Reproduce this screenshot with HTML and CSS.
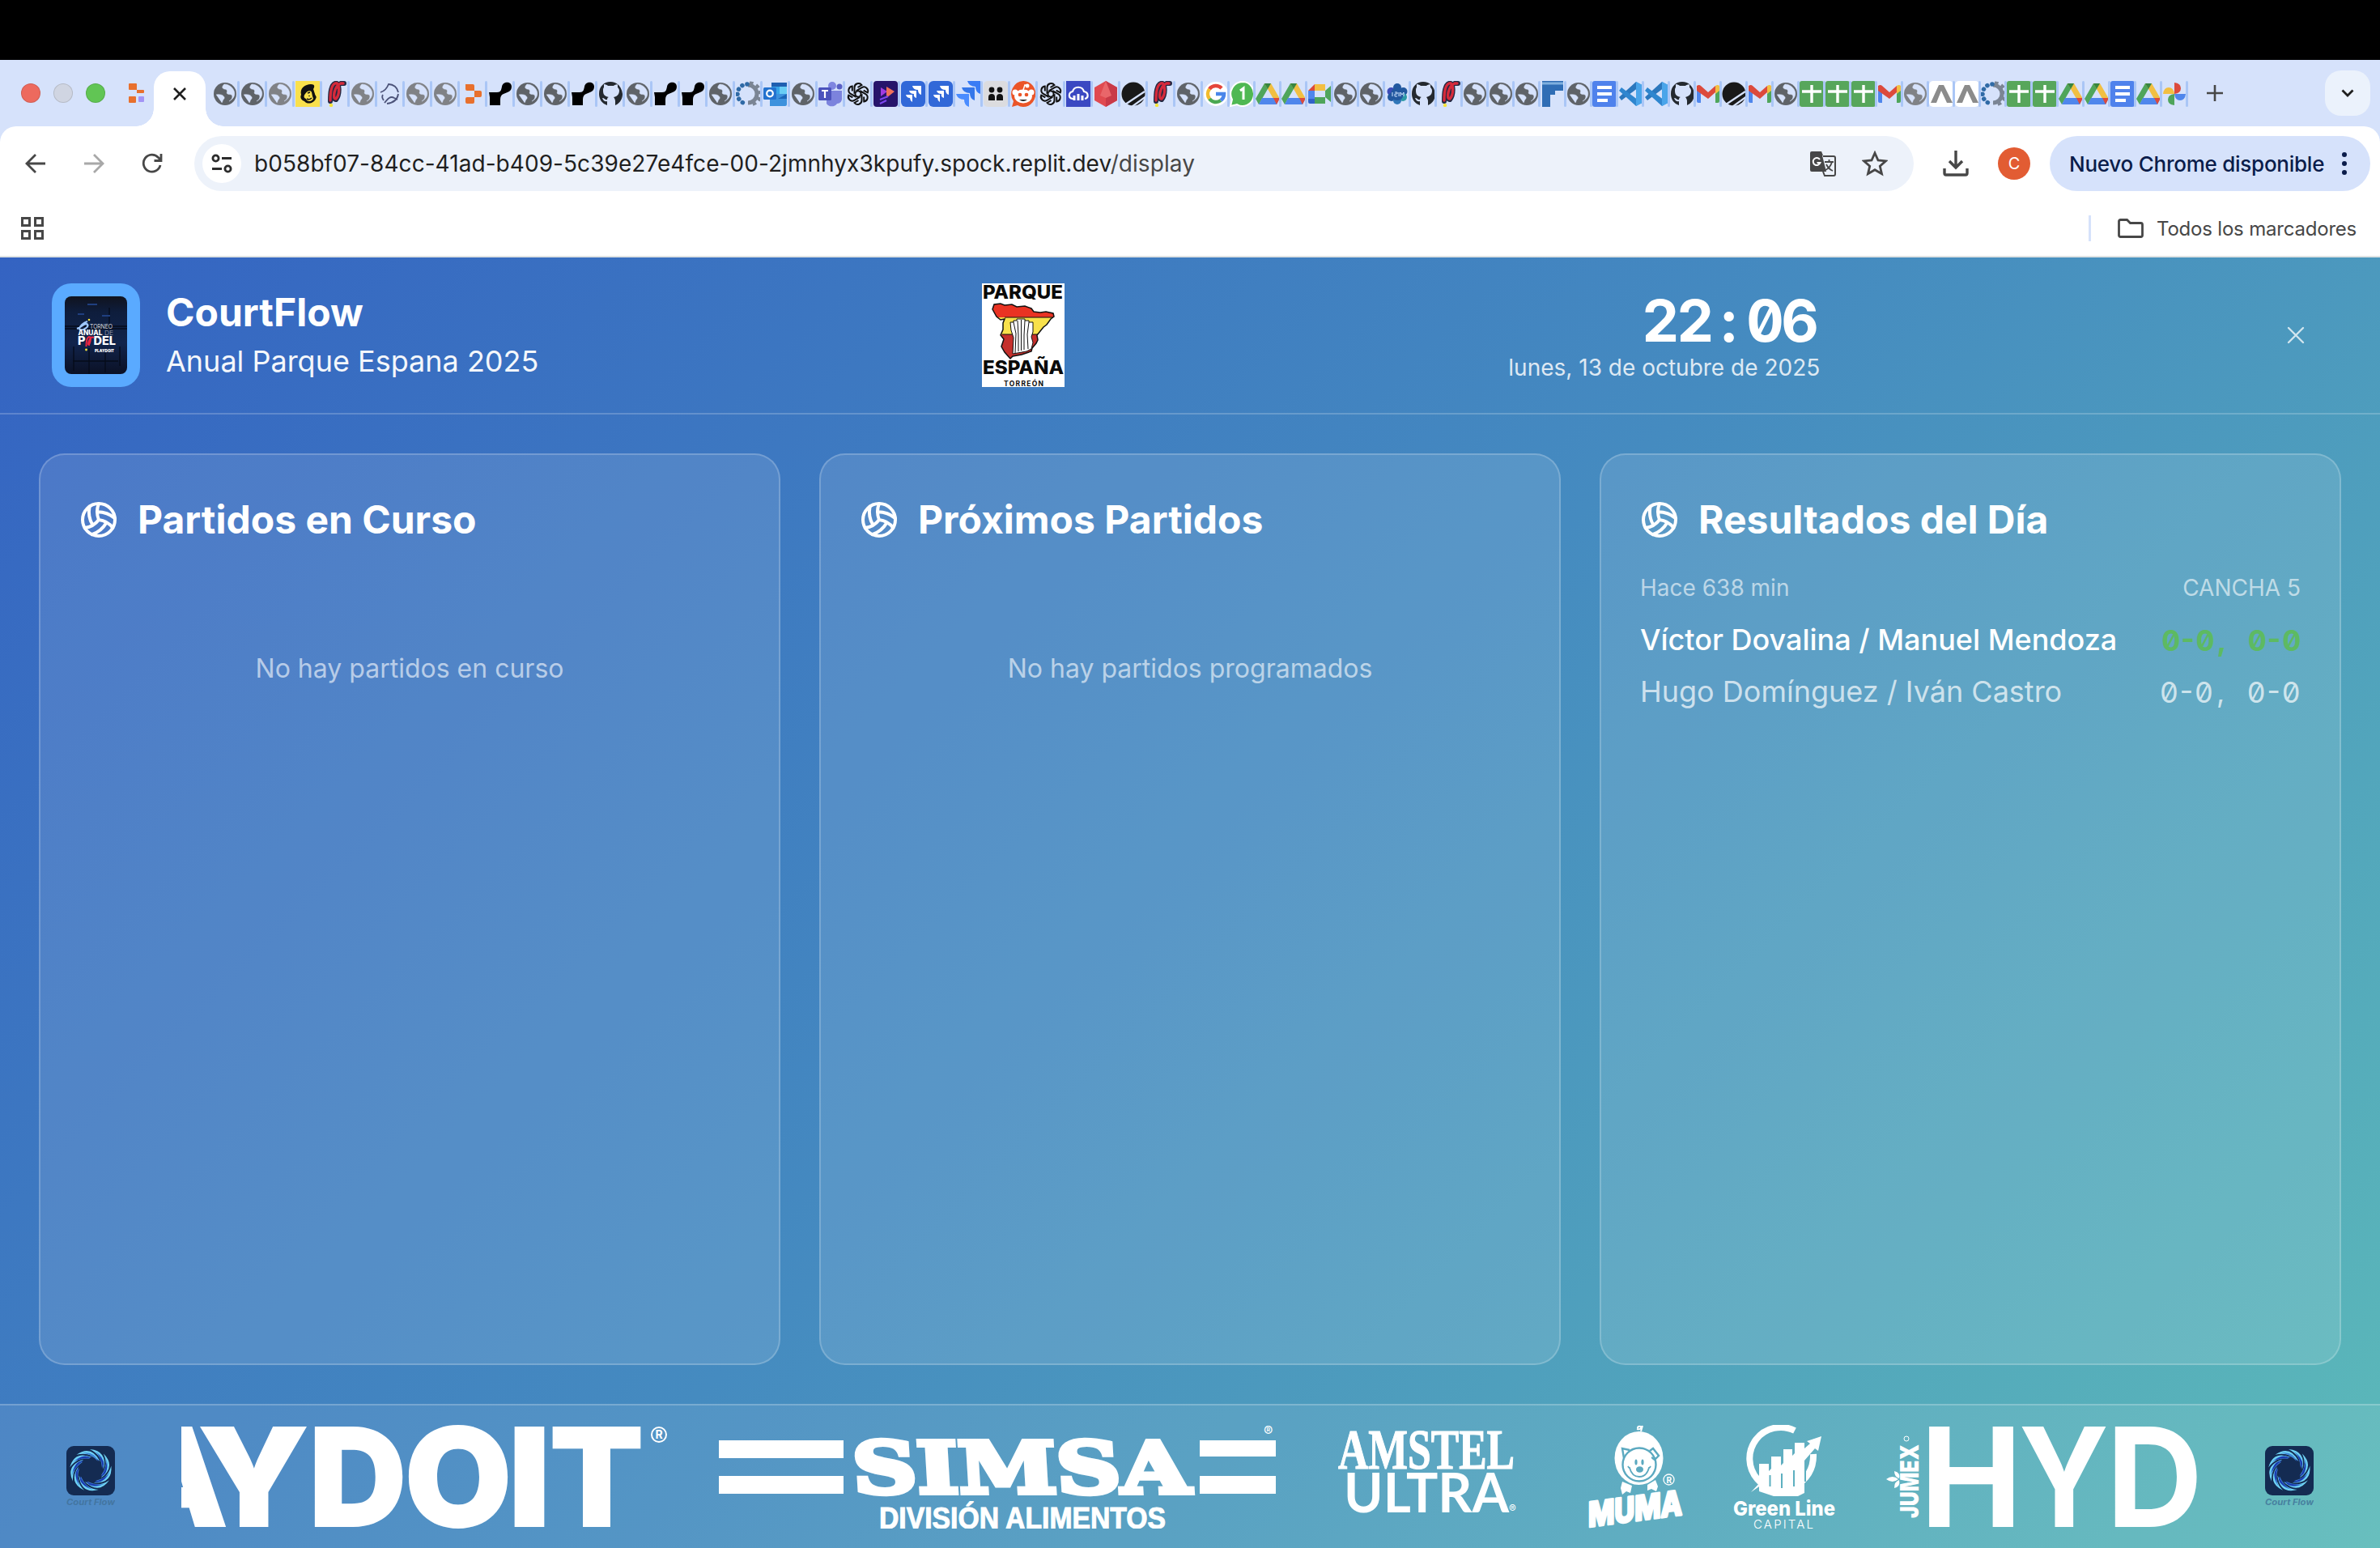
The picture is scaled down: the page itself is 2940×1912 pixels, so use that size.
FILE: index.html
```html
<!DOCTYPE html>
<html lang="es">
<head>
<meta charset="utf-8">
<title>CourtFlow</title>
<link rel="stylesheet" href="styles.css">
</head>
<body>
<svg class="defs" width="0" height="0">
  <symbol id="globe" viewBox="0 0 30 32"><circle cx="15" cy="16" r="14" fill="currentColor"/><path d="M4 17c4-1 9 0 10 3 1 2-2 3-2 5l-1 2M14 4c-3 3-3 5 0 6 4 0 4 3 3 5 2 3 6 0 7 4 0 3-2 5-4 6 6-3 8-8 6-13-2-5-7-8-12-8z" fill="#d6e2fb" stroke="#d6e2fb" stroke-width=".5"/></symbol>
  <symbol id="mailchimp" viewBox="0 0 30 32"><path fill="#f9e04c" d="M0 0h30v32H0z"/><path d="M7 17C5 9 12 4 19 4c5 0 5 3 3 6l2 6c0 2 3 3 1 6-2 5-10 8-14 3-3-1-6-4-4-8z" fill="#111"/><path d="M12 16c2-4 7-5 8-2l1 5 1 3c-2 4-8 4-9 0-3-1-3-4-1-6z" fill="#f9e04c"/><path d="M15 15l3-1M14 22q3 2 6-1M17 18v1" stroke="#111" stroke-width="1.6" fill="none"/></symbol>
  <symbol id="padel" viewBox="0 0 30 32"><path d="M9 25C9 14 10 5 15 3c6-2 6 14 1 20C11 24 14 6 22 3h4" fill="none" stroke="#222842" stroke-width="6" stroke-linecap="round"/><path d="M9 24C9 14 10 5 15 3c6-2 6 14 1 19C11 23 14 6 22 3h3" fill="none" stroke="#d52a3b" stroke-width="3.4" stroke-linecap="round"/><circle cx="10" cy="30" r="2.2" fill="#f5e43c"/></symbol>
  <symbol id="swirl" viewBox="0 0 30 32"><path d="M3 14c4-1 8-5 10-10 6 0 11 4 12 10M6 17q-2 3 1 7M8 27c4-5 7-9 12-6l4 2M25 16c-1 7-6 11-14 12" fill="none" stroke="#4c5379" stroke-width="1.8"/></symbol>
  <symbol id="replit" viewBox="0 0 30 32"><path d="M6 4h9a2 2 0 0 1 2 2v6H8a2 2 0 0 1-2-2zM17 12h7a2 2 0 0 1 2 2v4a2 2 0 0 1-2 2h-7zM6 22a2 2 0 0 1 2-2h9v6a2 2 0 0 1-2 2H8a2 2 0 0 1-2-2z" fill="#e8702d"/></symbol>
  <symbol id="joint" viewBox="0 0 30 32"><path d="M1 14h10c5 0 5-3 6-7 1-7 12-7 12 0 0 6-5 7-10 9-3 1-4 4-4 7v7H2V20z" fill="#000"/></symbol>
  <symbol id="github" viewBox="0 0 30 32"><path d="M15 1C7 1 1 7 1 16c0 7 4 12 10 14v-5c-4 1-5-2-6-4 3 0 3 3 6 2 0-2 1-3 2-3-5-1-7-3-7-8 0-2 0-3 1-4V4c2 0 4 1 5 2h7c1-1 3-2 5-2v4c1 1 2 2 2 4 0 5-3 7-7 8 1 1 2 3 2 5v5c5-2 9-7 9-14C29 7 23 1 15 1z" fill="#24292f"/></symbol>
  <symbol id="gear" viewBox="0 0 30 32"><path d="M15 5a11 11 0 0 1 0 22" fill="none" stroke="#7b8594" stroke-width="5"/><path d="M17 4a12 12 0 0 1 0 24" fill="none" stroke="#7b8594" stroke-width="7" stroke-dasharray="4 3.5"/><path d="M14 4a12 12 0 0 0 0 24" fill="none" stroke="#2f6aa6" stroke-width="5.5" stroke-linecap="round" stroke-dasharray=".1 6.200"/></symbol>
  <symbol id="outlook" viewBox="0 0 30 32"><path fill="#1f5fb0" d="M10 2h19v8H10z"/><path fill="#37a4e8" d="M10 7h10v9H10z"/><path fill="#69cdf5" d="M20 7h9v9h-9z"/><path fill="#3d92dd" d="M8 16h21v13a2 2 0 0 1-2 2H8z"/><path fill="#1c66b8" d="M18 22l11-6v6z"/><rect y="8" width="16" height="15" rx="1.5" fill="#2372cf"/><circle cx="8" cy="15.500" r="3.800" fill="none" stroke="#fff" stroke-width="2.200"/></symbol>
  <symbol id="teams" viewBox="0 0 30 32"><circle cx="17" cy="6" r="5" fill="#7f86e0"/><circle cx="26" cy="7" r="3.500" fill="#5960c4"/><path d="M10 12h19v9a6 6 0 0 1-6 7 8 8 0 0 1-13 0z" fill="#7c83dd"/><rect y="8" width="16" height="16" rx="1.500" fill="#4b53bc"/><path d="M4 12h8M8 12v9" stroke="#fff" stroke-width="2.200"/></symbol>
  <symbol id="openai" viewBox="0 0 30 32"><g fill="none" stroke="#111" stroke-width="2"><path id="oa" d="M15 12l-4.500 2.600V8a5 5 0 0 1 9-3l-5 3"/><use href="#oa" transform="rotate(60 15 16)"/><use href="#oa" transform="rotate(120 15 16)"/><use href="#oa" transform="rotate(180 15 16)"/><use href="#oa" transform="rotate(240 15 16)"/><use href="#oa" transform="rotate(300 15 16)"/></g></symbol>
  <symbol id="play" viewBox="0 0 30 32"><rect width="30" height="32" rx="4" fill="#27146b"/><path d="M9 8l8 5-8 6z" fill="#a03be0"/><path d="M16 7l10 6-10 8z" fill="#f0705a"/><path d="M8 23l10-4M8 28l8-4" stroke="#7d46f0" stroke-width="2"/></symbol>
  <symbol id="jira" viewBox="0 0 30 32"><rect width="30" height="32" rx="6" fill="#3168d8"/><path d="M14 6h11v11q-4-1-4-6-6 0-7-5zM10 12h9v9q-4-1-3-5-5 0-6-4zM6 17h8v9q-3-2-3-5-4 0-5-4z" fill="#fff"/></symbol>
  <symbol id="jirab" viewBox="0 0 30 32"><path d="M14 0h16v16q-6-2-6-9-8 0-10-7z" fill="#3a7cf5"/><path d="M7 8h16v16q-6-2-6-9-8 0-10-7z" fill="#3577ea"/><path d="M0 16h16v16q-6-2-6-9-8 0-10-7z" fill="#4a8cff"/></symbol>
  <symbol id="dots" viewBox="0 0 30 32"><rect width="30" height="32" rx="5" fill="#dcdcdf"/><g fill="#111"><circle cx="10" cy="11" r="3.400"/><circle cx="20" cy="11" r="3.400"/><path d="M6 24v-4q0-4 4-4t4 4v4zM16 24v-4q0-4 4-4t4 4v4z"/></g></symbol>
  <symbol id="reddit" viewBox="0 0 30 32"><path d="M15 0a15 16 0 1 1-7 30l-7 2 2-7A16 16 0 0 1 15 0z" fill="#eb5528"/><ellipse cx="15" cy="19" rx="11" ry="8.500" fill="#fff"/><circle cx="5" cy="14" r="3.500" fill="#fff"/><circle cx="25" cy="14" r="3.500" fill="#fff"/><circle cx="20" cy="6" r="2.500" fill="#fff"/><path d="M15 11l2-6 3 1" stroke="#fff" stroke-width="1.500" fill="none"/><circle cx="11" cy="17" r="2.300" fill="#eb5528"/><circle cx="19" cy="17" r="2.300" fill="#eb5528"/><path d="M10 23q5 4 10 0z" fill="#222"/></symbol>
  <symbol id="cloud" viewBox="0 0 30 32"><path fill="#3a48c2" d="M0 0h30v32H0z"/><path d="M9 22H8c-6-1-5-8 0-9 2-7 12-7 14 0 6 1 6 8 1 9" fill="none" stroke="#fff" stroke-width="2.200"/><path d="M10 18v6M15 16v8M20 18v6" stroke="#fff" stroke-width="3"/></symbol>
  <symbol id="gem" viewBox="0 0 30 32"><path d="M15 0l14 8v16l-14 8L1 24V8z" fill="#e04a50"/><path d="M15 0l14 8v16l-14 8z" fill="#c93a48"/><path d="M15 0l7 18-7 3-7-3z" fill="#e9666a"/></symbol>
  <symbol id="ball" viewBox="0 0 30 32"><circle cx="15" cy="16" r="14.500" fill="#191919"/><path d="M5 29L29 13M13 32L31 19" stroke="#d6e2fb" stroke-width="2.200"/></symbol>
  <symbol id="google" viewBox="0 0 30 32"><circle cx="15" cy="16" r="15" fill="#fff"/><g fill="none" stroke-width="4.500"><path d="M22 9A10 10 0 0 0 7 10" stroke="#e5443a"/><path d="M7 10a10 10 0 0 0 0 12" stroke="#f3bc2e"/><path d="M7 22a10 10 0 0 0 14 2" stroke="#4aa852"/><path d="M21 24a10 10 0 0 0 4-8H15" stroke="#4a86ea"/></g></symbol>
  <symbol id="wa" viewBox="0 0 30 32"><path d="M16 1A14 15 0 1 1 9 29l-8 2 2-8A15 15 0 0 1 16 1z" fill="#4fb853" stroke="#fff" stroke-width="2"/><path d="M13 12l4-3v14" stroke="#fff" stroke-width="3" fill="none"/></symbol>
  <symbol id="drive" viewBox="0 0 30 32"><path d="M11 3h8L8 22l-4 7-4-7z" fill="#4fa55b"/><path d="M11 3h8l11 19h-8z" fill="#f2bf42"/><path d="M8 21h22l-4 8H4z" fill="#4f86ec"/><path d="M22 21h8l-4 8z" fill="#dc4a3c"/><path d="M11 3h8l-4 7z" fill="#38853f"/></symbol>
  <symbol id="meet" viewBox="0 0 30 32"><path d="M9 4h13v8H9z" fill="#f2bf42"/><path d="M9 4v8H1z" fill="#dc4a3c"/><path d="M1 12h8v10H1z" fill="#4f86ec"/><path d="M1 22h8v6H3a2 2 0 0 1-2-2z" fill="#3163c8"/><path d="M9 20h13v8H9zM22 12l7-6v20l-7-6z" fill="#4fa55b"/></symbol>
  <symbol id="isim" viewBox="0 0 30 32"><g fill="#22589f"><circle cx="15" cy="8" r="5"/><circle cx="7.500" cy="13" r="5" fill="#3d4cb8"/><circle cx="22.500" cy="13" r="5"/><circle cx="8" cy="20" r="5"/><circle cx="22" cy="20" r="5" fill="#2c9aa6"/><circle cx="15" cy="24" r="5" fill="#2f77b9"/><circle cx="15" cy="16" r="8"/></g><path d="M9 14v5M12 14h3v2h-3v3h3M17 14v5M19 19v-5l2 3 2-3v5" stroke="#cfe4ff" fill="none"/></symbol>
  <symbol id="fig" viewBox="0 0 30 32"><path d="M2 0h26v12H18v5h-6v15H2z" fill="#2f6db5"/><path d="M2 3h26" stroke="#7fb0df" stroke-width="3"/></symbol>
  <symbol id="docs" viewBox="0 0 30 32"><rect width="30" height="32" rx="3" fill="#4f82ec"/><path d="M6 8h18M6 16h18M6 24h13" stroke="#fff" stroke-width="4"/></symbol>
  <symbol id="vs" viewBox="0 0 30 32"><path d="M22 1L1 20l3 4L29 5z" fill="#2b77bd"/><path d="M4 8L1 12l21 19 7-4z" fill="#2f86cf"/><path d="M22 1l8 4v22l-8 4z" fill="#4aa5ea"/></symbol>
  <symbol id="gmail" viewBox="0 0 30 32"><path d="M1 7l5-1v21H3a2 2 0 0 1-2-2z" fill="#4f86ec"/><path d="M24 6l5 1v18a2 2 0 0 1-2 2h-3z" fill="#4fa55b"/><path d="M1 6q3-2 5 0l9 8 9-8v8l-9 8L1 12z" fill="#dc4a3c"/><path d="M24 6q3-2 5 0v6l-5 4z" fill="#f2bf42"/></symbol>
  <symbol id="sheet" viewBox="0 0 30 32"><rect width="30" height="32" rx="3" fill="#57a65b"/><path d="M3 13h24M15 5v22" stroke="#fff" stroke-width="3.400"/></symbol>
  <symbol id="caret" viewBox="0 0 30 32"><rect width="30" height="32" rx="5" fill="#fff"/><path d="M2 27L12 5h6l11 22h-7L15 12 9 27z" fill="#8b8b8b"/></symbol>
  <symbol id="photos" viewBox="0 0 30 32"><path d="M15 16V2q8 1 8 7t-8 7z" fill="#dc4a3c"/><path d="M15 16h14q-1 8-7 8t-7-8z" fill="#4f86ec"/><path d="M15 16v14q-8-1-8-7t8-7z" fill="#4fa55b"/><path d="M15 16H1q1-8 7-8t7 8z" fill="#f2bf42"/></symbol>
  <symbol id="volley" viewBox="0 0 24 24"><g fill="none" stroke="#fff" stroke-width="2" stroke-linecap="round" stroke-linejoin="round"><path d="M11.1 7.100a16.550 16.550 0 0 1 10.900 4M12 12a12.600 12.600 0 0 1-8.700 5M16.800 13.600a16.550 16.550 0 0 1-9 7.500M20.700 17a12.800 12.800 0 0 0-8.700-5 13.300 13.300 0 0 1 0-10M6.300 3.800a16.550 16.550 0 0 0 1.900 11.500"/><circle cx="12" cy="12" r="10"/></g></symbol>
  <symbol id="vortex" viewBox="0 0 60 76">
    <rect width="60" height="61" rx="9" fill="#142b52"/>
    <g id="v4"><g id="v1"><path d="M29 4q22 2 17 25Q44 11 29 4z" fill="#6fd3f5"/><path d="M36 7q13 8 8 20Q43 14 36 7z" fill="#3f86d8"/><path d="M24 9q14 0 16 10Q34 12 24 9z" fill="#1b3bb0"/></g><use href="#v1" transform="rotate(40 30 30)"/><use href="#v1" transform="rotate(80 30 30)"/></g>
    <use href="#v4" transform="rotate(120 30 30)"/><use href="#v4" transform="rotate(240 30 30)"/>
    <text x="0" y="73" textLength="60" lengthAdjust="spacingAndGlyphs" font-family="Inter" font-size="10.500" font-style="italic" font-weight="700" fill="#3f7097" fill-opacity=".8">Court Flow</text>
  </symbol>
</svg>

<div class="bezel"></div>
<div class="chrome">
  <div class="tabstrip">
    <div class="lights"><i class="red"></i><i class="off"></i><i class="go"></i></div>
    <svg class="pinned" viewBox="0 0 22 26"><path d="M1 2a1 1 0 0 1 1-1h8q1 0 1 1v7H2q-1 0-1-1zM11 9h8q1 0 1 1v2q0 1-1 1h-8zM1 18q0-1 1-1h7q1 0 1 1v6q0 1-1 1H2q-1 0-1-1z" fill="#e8702d"/><rect x="13" y="17" width="7" height="7" rx="1" fill="#a394f5"/></svg>
    <div class="active"><svg viewBox="0 0 16 16"><path d="M1 1l14 14M15 1L1 15" stroke="#1f1f1f" stroke-width="2.600"/></svg></div>
    <div class="favs">
      <i><svg><use href="#globe"/></svg></i><i><svg><use href="#globe"/></svg></i><i class="lt"><svg><use href="#globe"/></svg></i><i><svg><use href="#mailchimp"/></svg></i><i><svg><use href="#padel"/></svg></i><i class="lt"><svg><use href="#globe"/></svg></i><i><svg><use href="#swirl"/></svg></i><i class="lt"><svg><use href="#globe"/></svg></i><i class="lt"><svg><use href="#globe"/></svg></i><i><svg><use href="#replit"/></svg></i><i><svg><use href="#joint"/></svg></i><i><svg><use href="#globe"/></svg></i><i><svg><use href="#globe"/></svg></i><i><svg><use href="#joint"/></svg></i><i><svg><use href="#github"/></svg></i><i><svg><use href="#globe"/></svg></i><i><svg><use href="#joint"/></svg></i><i><svg><use href="#joint"/></svg></i><i><svg><use href="#globe"/></svg></i><i><svg><use href="#gear"/></svg></i><i><svg><use href="#outlook"/></svg></i><i><svg><use href="#globe"/></svg></i><i><svg><use href="#teams"/></svg></i><i><svg><use href="#openai"/></svg></i><i><svg><use href="#play"/></svg></i><i><svg><use href="#jira"/></svg></i><i><svg><use href="#jira"/></svg></i><i><svg><use href="#jirab"/></svg></i><i><svg><use href="#dots"/></svg></i><i><svg><use href="#reddit"/></svg></i><i><svg><use href="#openai"/></svg></i><i><svg><use href="#cloud"/></svg></i><i><svg><use href="#gem"/></svg></i><i><svg><use href="#ball"/></svg></i><i><svg><use href="#padel"/></svg></i><i><svg><use href="#globe"/></svg></i>
    </div>
    <div class="favs tight">
      <i><svg><use href="#google"/></svg></i><i><svg><use href="#wa"/></svg></i><i><svg><use href="#drive"/></svg></i><i><svg><use href="#drive"/></svg></i><i><svg><use href="#meet"/></svg></i><i><svg><use href="#globe"/></svg></i><i><svg><use href="#globe"/></svg></i><i><svg><use href="#isim"/></svg></i><i><svg><use href="#github"/></svg></i><i><svg><use href="#padel"/></svg></i><i><svg><use href="#globe"/></svg></i><i><svg><use href="#globe"/></svg></i><i><svg><use href="#globe"/></svg></i><i><svg><use href="#fig"/></svg></i><i><svg><use href="#globe"/></svg></i><i><svg><use href="#docs"/></svg></i><i><svg><use href="#vs"/></svg></i><i><svg><use href="#vs"/></svg></i><i><svg><use href="#github"/></svg></i><i><svg><use href="#gmail"/></svg></i><i><svg><use href="#ball"/></svg></i><i><svg><use href="#gmail"/></svg></i><i><svg><use href="#globe"/></svg></i><i><svg><use href="#sheet"/></svg></i><i><svg><use href="#sheet"/></svg></i><i><svg><use href="#sheet"/></svg></i><i><svg><use href="#gmail"/></svg></i><i class="lt"><svg><use href="#globe"/></svg></i><i><svg><use href="#caret"/></svg></i><i><svg><use href="#caret"/></svg></i><i><svg><use href="#gear"/></svg></i><i><svg><use href="#sheet"/></svg></i><i><svg><use href="#sheet"/></svg></i><i><svg><use href="#drive"/></svg></i><i><svg><use href="#drive"/></svg></i><i><svg><use href="#docs"/></svg></i><i><svg><use href="#drive"/></svg></i><i><svg><use href="#photos"/></svg></i>
    </div>
    <svg class="plus" viewBox="0 0 24 24"><path d="M12 2v20M2 12h20" stroke="#474747" stroke-width="2.600"/></svg>
    <div class="chev"><svg viewBox="0 0 16 10"><path d="M1.500 1.500L8 8l6.500-6.500" fill="none" stroke="#1f1f1f" stroke-width="2.800"/></svg></div>
  </div>
  <div class="toolbar">
    <div class="nav">
      <svg viewBox="0 0 26 26"><path d="M25 13H3M13 2L2 13l11 11" fill="none" stroke="#474747" stroke-width="2.800"/></svg>
      <svg viewBox="0 0 26 26"><path d="M1 13h22M13 2l11 11-11 11" fill="none" stroke="#a8a8a8" stroke-width="2.800"/></svg>
      <svg viewBox="0 0 26 26"><path d="M23 15a10.500 10.500 0 1 1-2.500-9.500L24 9M24 1v8.500h-8.500" fill="none" stroke="#474747" stroke-width="2.800"/></svg>
    </div>
    <div class="omni">
      <div class="site"><svg viewBox="0 0 26 26"><g fill="none" stroke="#2c2c2c" stroke-width="2.800"><circle cx="5.500" cy="6.500" r="3.600"/><circle cx="20.500" cy="19.500" r="3.600"/><path d="M13 6.500h12M1 19.500h12"/></g></svg></div>
      <div class="url">b058bf07-84cc-41ad-b409-5c39e27e4fce-00-2jmnhyx3kpufy.spock.replit.dev<span>/display</span></div>
      <svg class="tr" viewBox="0 0 34 34"><path d="M3 2h12l2 5h-1l5 20H3q-2 0-2-2V4q0-2 2-2z" fill="#474747"/><path d="M17 8h13q2 0 2 2v20q0 2-2 2H19l-2-5" fill="none" stroke="#474747" stroke-width="2"/><path d="M13 12a4.500 4.500 0 1 0 .5 4H9.500" fill="none" stroke="#fff" stroke-width="2"/><path d="M19 15h11M24.500 12v3M28 15q-2 7-8 10M21 18q3 6 8 8" fill="none" stroke="#474747" stroke-width="1.800"/></svg>
      <svg class="star" viewBox="0 0 32 32"><path d="M16 3l4 9 9.500.9-7.200 6.400 2.200 9.400L16 23.700l-8.500 5 2.200-9.400L2.500 12.900 12 12z" fill="none" stroke="#474747" stroke-width="2.800"/></svg>
    </div>
    <svg class="dl" viewBox="0 0 32 32"><path d="M16 0v21M8 13l8 8 8-8M2 22v6q0 2 2 2h24q2 0 2-2v-6" fill="none" stroke="#474747" stroke-width="3.400"/></svg>
    <div class="avatar">C</div>
    <div class="update"><span>Nuevo Chrome disponible</span><svg viewBox="0 0 6 28"><circle cx="3" cy="3" r="3"/><circle cx="3" cy="14" r="3"/><circle cx="3" cy="25" r="3"/></svg></div>
  </div>
  <div class="bookmarks">
    <svg class="apps" viewBox="0 0 28 28"><path d="M1.500 1.500h9v9h-9zM17.500 1.500h9v9h-9zM1.500 17.500h9v9h-9zM17.500 17.500h9v9h-9z" fill="none" stroke="#474747" stroke-width="3"/></svg>
    <i class="bar"></i>
    <svg class="folder" viewBox="0 0 32 24"><path d="M3.500 1.500h8l4 4h13q2 0 2 2v13q0 2-2 2h-25q-2 0-2-2v-17q0-2 2-2z" fill="none" stroke="#474747" stroke-width="2.800"/></svg>
    <span>Todos los marcadores</span>
  </div>
</div>

<main class="app">
  <header class="head">
    <div class="brand">
      <div class="tile">
        <svg viewBox="0 0 77 96">
          <defs><linearGradient id="night" x1="0" y1="0" x2="0" y2="1"><stop offset="0" stop-color="#10131f"/><stop offset=".2" stop-color="#0e1d3c"/><stop offset=".6" stop-color="#11244c"/><stop offset="1" stop-color="#0b1125"/></linearGradient></defs>
          <rect width="77" height="96" rx="8" fill="url(#night)"/>
          <path d="M0 37h77M0 40h77M11 62v30M30 64v32M50 70v24M68 62v24M55 14v26M10 80h56" stroke="#060b1a" stroke-width="1.300"/>
          <path d="M28 10h12M46 24h10M16 22h8" stroke="#1f3f80" stroke-width="2"/>
          <path d="M28 31q-8 3-10 9 0 2 5 1c5-2 7-5 4-7-4 0-8 5-12 6" fill="none" stroke="#9fc8ff" stroke-width="2.200"/>
          <g font-family="Inter" font-weight="800" fill="#fff">
            <text x="31" y="40" font-size="7.500" font-weight="300" textLength="28" lengthAdjust="spacingAndGlyphs">TORNEO</text>
            <text x="16.500" y="47.800" font-size="8.500" textLength="30" lengthAdjust="spacingAndGlyphs">ANUAL</text>
            <text x="49" y="47.800" font-size="8" font-weight="300" textLength="11" fill-opacity=".6" lengthAdjust="spacingAndGlyphs">DE</text>
            <text x="16" y="59.500" font-size="14.500" textLength="9.500" lengthAdjust="spacingAndGlyphs">P</text>
            <text x="35.500" y="59.500" font-size="14.500" textLength="27.500" lengthAdjust="spacingAndGlyphs">DEL</text>
            <text x="37" y="68.500" font-size="5" font-weight="900" textLength="24" lengthAdjust="spacingAndGlyphs">PLAYDOIT</text>
          </g>
          <path d="M26.500 62q0-11 3.500-12 4 0 0 10-3 0 2-9 2-1 4 0" fill="none" stroke="#ec2440" stroke-width="2"/>
          <circle cx="26.500" cy="66" r="1.400" fill="#f5e43c"/><circle cx="30" cy="29" r="1.300" fill="#f5e43c"/>
        </svg>
      </div>
      <div class="names"><h1>CourtFlow</h1><p>Anual Parque Espana 2025</p></div>
    </div>
    <svg class="parque" viewBox="0 0 102 128">
      <rect width="102" height="128" fill="#fff"/>
      <clipPath id="es"><path id="esp" d="M13 32l2-6 8-1 5 2 9-1 6 3 10-1 8 3 3 4 8 1 7-1 9 2 1 4-4 3-5 7-4 3-8 10 1 6-2 4-5 6-1 4-12 4-11 2-3 3-7-8-4-7 3-9-4-5 3-7v-8l2-5-5 1-5-4z"/></clipPath>
      <g clip-path="url(#es)"><path d="M0 20h102v22H0z" fill="#e93323"/><path d="M0 42h102v21H0z" fill="#f8e14b"/><path d="M0 63h102v30H0z" fill="#c5302c"/></g>
      <path d="M28 42h60M25 63h44" stroke="#111"/><use href="#esp" fill="none" stroke="#111" stroke-width="1.500"/>
      <path d="M35 48h4v-2h4v-2h10v2h5v2h5v12l-2 6 2 7-2 8-6 3-17 3 1-20-3-9z" fill="#fff" stroke="#111"/><path d="M39 48l3 14-1 24M44 46l1 18v20M48.500 45v38M53 46l-1 18v18M58 48l-2 15 1 18" fill="none" stroke="#111"/>
      <g font-family="Inter" font-weight="800" fill="#0a0a0a"><text x="1" y="18.500" font-size="23" textLength="99" lengthAdjust="spacingAndGlyphs">PARQUE</text><text x="1" y="111.500" font-size="23" textLength="100" lengthAdjust="spacingAndGlyphs">ESPAÑA</text><text x="27" y="126.500" font-size="8.500" font-weight="700" textLength="49">TORREÓN</text></g>
    </svg>
    <div class="when"><div class="clock">22<b>:</b>06</div><div class="date">lunes, 13 de octubre de 2025</div></div>
    <div class="close"><svg viewBox="0 0 24 24"><path d="M18 6L6 18M6 6l12 12" stroke="#fff" stroke-width="1.600" stroke-linecap="round" opacity=".75"/></svg></div>
  </header>

  <div class="cols">
    <section class="card"><h2><svg><use href="#volley"/></svg>Partidos en Curso</h2><p class="empty">No hay partidos en curso</p></section>
    <section class="card"><h2><svg><use href="#volley"/></svg>Próximos Partidos</h2><p class="empty">No hay partidos programados</p></section>
    <section class="card"><h2><svg><use href="#volley"/></svg>Resultados del Día</h2>
      <div class="meta"><span>Hace 638 min</span><span>CANCHA 5</span></div>
      <div class="row win"><span>Víctor Dovalina / Manuel Mendoza</span><span class="score">0<b>-</b>0<b>,</b><b> </b>0<b>-</b>0</span></div>
      <div class="row lose"><span>Hugo Domínguez / Iván Castro</span><span class="score">0<b>-</b>0<b>,</b><b> </b>0<b>-</b>0</span></div>
    </section>
  </div>

  <footer class="foot">
    <svg class="cf" viewBox="0 0 60 76"><use href="#vortex"/></svg>
    <svg class="doit" viewBox="224 1760 600 128"><g font-family="Inter" font-weight="900" fill="#fff"><text y="1886" font-size="171" x="147">A</text><text y="1886" font-size="171" x="243" textLength="140" lengthAdjust="spacingAndGlyphs">Y</text><text y="1886" font-size="171" x="381" textLength="122" lengthAdjust="spacingAndGlyphs">D</text><text y="1886" font-size="171" x="499" textLength="134" lengthAdjust="spacingAndGlyphs">O</text><text y="1886" font-size="171" x="627" textLength="54" lengthAdjust="spacingAndGlyphs">I</text><text y="1886" font-size="171" x="678" textLength="118" lengthAdjust="spacingAndGlyphs">T</text><text x="809.500" y="1777" font-size="14" font-weight="700">R</text></g><circle cx="814" cy="1772" r="9" fill="none" stroke="#fff" stroke-width="2"/></svg>
    <svg class="simsa" viewBox="888 1760 688 128"><path d="M888 1779h154v22H888zM888 1823h154v22H888zM1482 1779h94v20h-94zM1482 1823h94v22h-94z" fill="#fff"/><g fill="#fff"><text x="0" y="0" transform="matrix(1 0 .06 1 1055 1844)" font-family="DejaVu Serif" font-weight="700" font-size="88" textLength="416" lengthAdjust="spacingAndGlyphs" stroke="#fff" stroke-width="6">SIMSA</text><text x="1086" y="1888" font-family="Liberation Sans" font-weight="700" font-size="36" stroke="#fff" textLength="354" lengthAdjust="spacingAndGlyphs">DIVISIÓN ALIMENTOS</text><text x="1561" y="1774" font-family="Inter" font-size="17">®</text></g></svg>
    <svg class="amstel" viewBox="1640 1760 248 128"><g fill="#fff"><text x="1653" y="1814" font-family="Liberation Serif" font-weight="700" font-size="70" textLength="218" lengthAdjust="spacingAndGlyphs" stroke="#fff" stroke-width="1.200">AMSTEL</text><text x="1660" y="1868" font-family="Lato" font-weight="700" font-size="66" textLength="204" lengthAdjust="spacingAndGlyphs">ULTRA</text><text x="1864" y="1868" font-family="Inter" font-size="13">®</text></g></svg>
    <svg class="muma" viewBox="1952 1760 136 128"><g fill="#fff"><ellipse cx="2024.500" cy="1801" rx="30" ry="33"/><path d="M2004 1830l12 5-2 9-5-2-5 4-2-8zM2045 1828l-10 6v7l5-2 6 3 2-6z"/></g><path d="M2022 1765q6 1 5-3-4-1-4 2M2027 1768l2-7" fill="none" stroke="#fff" stroke-width="2"/><g fill="none" stroke="#5ba9c0" stroke-width="2.400"><circle cx="2025" cy="1809" r="20.500"/><path d="M2006 1801l-2-12 9 2M2038 1792l4-3 7 9-5 5-4-3"/></g><circle cx="2025" cy="1809" r="17" fill="#fff"/><path d="M2011 1811q1 2 2 2 3 11 12 11t12-11q1 0 2-2" fill="none" stroke="#5ba9c0" stroke-width="1.800"/><g fill="#5ba9c0"><ellipse cx="2021" cy="1806" rx="1.600" ry="3.500"/><ellipse cx="2029" cy="1806" rx="1.600" ry="3.500"/><ellipse cx="2025.500" cy="1815" rx="4.500" ry="3.800"/></g><circle cx="2061.500" cy="1827.500" r="6.500" fill="none" stroke="#fff" stroke-width="1.300"/><g fill="#fff" font-family="Inter"><text x="2058.500" y="1831.500" font-size="10" font-weight="700">R</text><text font-weight="800" font-size="42" x="0" y="0" transform="matrix(1 -.13 0 1 1962 1886)" textLength="116" lengthAdjust="spacingAndGlyphs" stroke="#fff" stroke-width="3" stroke-linejoin="round">MUMA</text></g></svg>
    <svg class="glc" viewBox="2140 1760 128 128"><g fill="none" stroke="#fff"><path d="M2217 1767a38.500 38.500 0 0 0-46 60q20 22 46 9 24-14 23-40" stroke-width="8"/></g><path d="M2163 1843l13-14 3 3zM2173 1808h12v9l3-3v-15h12v11l3-3v-17h11v8l3-3v-13h12v7l7-6-4-3 18-6-4 18-4-3-13 15v40l-8 4h-30l-18-6z" fill="#fff"/><path d="M2186.500 1822v14M2201 1820v18M2216 1816v20M2230 1812v18" stroke="#5db0c0" stroke-width="2"/><g fill="#fff" font-family="Inter"><text x="2141" y="1872" font-size="25" font-weight="800" textLength="126" lengthAdjust="spacingAndGlyphs">Green Line</text><text x="2166" y="1888" font-size="15" font-weight="300" textLength="74">CAPITAL</text></g></svg>
    <svg class="hyd" viewBox="2328 1760 388 128"><g fill="#fff"><text font-family="Inter" font-weight="900" font-size="32" transform="translate(2370 1875) rotate(-90)" textLength="91" lengthAdjust="spacingAndGlyphs">JUMEX</text><path d="M2330 1827q8-6 15 0-7 6-15 0zM2340 1817q8 2 6 9-6-2-6-9zM2340 1838q8-2 6-10-6 2-6 10z"/><g font-family="Inter" font-weight="700" font-size="171"><text x="2372" y="1886" textLength="126" lengthAdjust="spacingAndGlyphs">H</text><text x="2494" y="1886" textLength="111" lengthAdjust="spacingAndGlyphs">Y</text><text x="2602" y="1886" textLength="119" lengthAdjust="spacingAndGlyphs">D</text></g></g><circle cx="2355" cy="1777" r="3" fill="none" stroke="#fff"/></svg>
    <svg class="cf last" viewBox="0 0 60 76"><use href="#vortex"/></svg>
  </footer>
</main>
</body>
</html>
```

FILE: styles.css
```css
* { box-sizing: border-box; }
body { margin: 0; width: 2940px; height: 1912px; overflow: hidden; display: flex; flex-direction: column; font-family: Inter, "Liberation Sans", sans-serif; }
h1, h2, p { margin: 0; }
svg { display: block; flex: none; }
.defs { position: absolute; }
i { display: block; font-style: normal; }

.bezel { height: 74px; background: #000; flex: none; }
.chrome { background: #d6e2fb; flex: none; }
.tabstrip { height: 82px; display: flex; align-items: center; padding: 0 12px 0 26px; }
.lights { display: flex; gap: 16px; }
.lights i { width: 24px; height: 24px; border-radius: 50%; border: 1px solid rgba(0,0,0,.12); }
.red { background: #ed6a5e; }
.off { background: #d0d5e2; }
.go { background: #61c554; }
.pinned { width: 22px; height: 26px; margin-left: 28px; }
.active { position: relative; align-self: flex-end; width: 64px; height: 68px; margin-left: 10px; background: #fff; border-radius: 20px 20px 0 0; display: flex; align-items: center; justify-content: center; padding-bottom: 12px; }
.active svg { width: 16px; height: 16px; }
.active::before, .active::after { content: ""; position: absolute; bottom: 0; width: 22px; height: 22px; }
.active::before { left: -22px; background: radial-gradient(circle at 0 0, transparent 21.5px, #fff 22px); }
.active::after { right: -22px; background: radial-gradient(circle at 100% 0, transparent 21.5px, #fff 22px); }
.favs { display: flex; margin-left: 9px; padding-top: 2px; color: #5f6368; }
.favs i { display: flex; width: 34px; height: 32px; }
.favs i::after { content: ""; flex: none; width: 3px; height: 32px; border-radius: 2px; background: #aac6f6; }
.favs svg { width: 30px; height: 32px; }
.favs .lt { color: #808286; }
.favs.tight { margin-left: 0; }
.favs.tight i { width: 32px; }
.favs.tight i::after { margin-left: -1px; }
.plus { width: 24px; height: 24px; margin-left: 21px; }
.chev { margin-left: auto; width: 56px; height: 56px; border-radius: 20px; background: #ebf2fc; display: flex; align-items: center; justify-content: center; }
.chev svg { width: 16px; height: 10px; }

.toolbar { height: 92px; background: #fff; border-radius: 20px 20px 0 0; display: flex; align-items: center; padding: 0 12px 0 31px; }
.nav { display: flex; gap: 46px; }
.nav svg { width: 26px; height: 26px; }
.omni { width: 2124px; height: 68px; margin-left: 39px; border-radius: 34px; background: #edf2fa; display: flex; align-items: center; padding: 0 32px 0 10px; }
.site { width: 48px; height: 48px; border-radius: 50%; background: #fff; display: flex; align-items: center; justify-content: center; }
.site svg { width: 26px; height: 26px; }
.url { margin-left: 16px; font-size: 28px; color: #1f1f1f; white-space: nowrap; flex: 1; letter-spacing: .06px; }
.url span { color: #474747; }
.tr { width: 34px; height: 34px; margin-right: 31px; }
.star { width: 32px; height: 32px; }
.dl { width: 32px; height: 32px; margin-left: 36px; }
.avatar { width: 40px; height: 40px; margin-left: 36px; border-radius: 50%; background: #e25c33; color: #fff; font-size: 20px; display: flex; align-items: center; justify-content: center; }
.update { width: 396px; height: 68px; margin-left: 24px; border-radius: 34px; background: #d6e2fb; color: #0a1c4a; display: flex; align-items: center; justify-content: space-between; padding: 0 29px 0 24px; font-size: 26px; font-weight: 450; letter-spacing: -.25px; white-space: nowrap; }
.update svg { width: 6px; height: 28px; fill: #0a1c4a; }
.bookmarks { height: 70px; background: #fff; border-bottom: 2px solid #dfe3e4; display: flex; align-items: center; padding: 0 28px 0 26px; color: #474747; font-size: 24px; }
.apps { width: 28px; height: 28px; }
.bar { width: 3px; height: 32px; background: #d6e2fb; margin-left: auto; }
.folder { width: 32px; height: 24px; margin: 0 16px 0 33px; }
.bookmarks span { width: 248px; white-space: nowrap; letter-spacing: -.2px; }

.app { flex: 1; min-height: 0; display: flex; flex-direction: column; color: #fff; background: linear-gradient(135deg, #3463c2 0%, #458bc0 50%, #5cbab9 100%); }
.head { height: 194px; flex: none; padding: 0 64px; border-bottom: 2px solid rgba(255,255,255,.2); display: flex; align-items: center; justify-content: space-between; }
.brand { display: flex; align-items: center; gap: 32px; width: 600px; }
.tile { width: 109px; height: 128px; border-radius: 24px; background: #5aaaff; padding: 16px; }
.tile svg { width: 77px; height: 96px; }
.names { white-space: nowrap; }
.names h1 { font-size: 48px; line-height: 64px; font-weight: 700; }
.names p { font-size: 36px; line-height: 56px; opacity: .95; }
.parque { width: 102px; height: 128px; }
.when { width: 384px; text-align: right; white-space: nowrap; }
.clock { height: 80px; font-size: 72px; line-height: 83px; font-weight: 700; padding-right: 4px; letter-spacing: -3.500px; font-feature-settings: "tnum", "zero"; }
.clock b, .score b { display: inline-block; width: .6em; text-align: center; font-weight: inherit; white-space: pre; letter-spacing: 0; }
.date { font-size: 28px; line-height: 40px; opacity: .82; }
.close { width: 80px; display: flex; justify-content: center; }
.close svg { width: 36px; height: 36px; }

.cols { flex: 1; min-height: 0; display: grid; grid-template-columns: repeat(3, 1fr); gap: 48px; padding: 48px; }
.card { border: 2px solid rgba(255,255,255,.2); border-radius: 32px; background: rgba(255,255,255,.11); padding: 48px; }
.card h2 { display: flex; align-items: center; gap: 24px; height: 64px; font-size: 48px; line-height: 63px; padding-bottom: 1px; font-weight: 700; margin-bottom: 32px; white-space: nowrap; }
.card h2 svg { width: 48px; height: 48px; }
.empty { text-align: center; padding: 96px 0; font-size: 32px; line-height: 48px; color: rgba(255,255,255,.6); }
.meta, .row { display: flex; justify-content: space-between; white-space: nowrap; }
.meta { font-size: 28px; line-height: 40px; color: rgba(255,255,255,.6); margin-bottom: 16px; }
.row { height: 56px; font-size: 36px; line-height: 56px; margin-bottom: 8px; }
.win { font-weight: 500; }
.lose { color: rgba(255,255,255,.7); }
.score { letter-spacing: -1.900px; padding: 1px 2px 0 0; font-feature-settings: "tnum", "zero", "case"; }
.win .score { color: #5dba62; font-weight: 700; letter-spacing: -2.400px; }

.foot { height: 178px; flex: none; border-top: 2px solid rgba(255,255,255,.22); background: rgba(255,255,255,.08); display: flex; align-items: center; padding: 0 82px; }
.foot svg { height: 128px; }
.foot .cf { width: 60px; height: 76px; }
.doit { width: 600px; margin-left: 82px; }
.simsa { width: 688px; margin-left: 64px; }
.amstel { width: 248px; margin-left: 64px; }
.muma { width: 136px; margin-left: 64px; }
.glc { width: 128px; margin-left: 52px; }
.hyd { width: 388px; margin-left: 60px; }
.foot .last { margin-left: auto; }
```
